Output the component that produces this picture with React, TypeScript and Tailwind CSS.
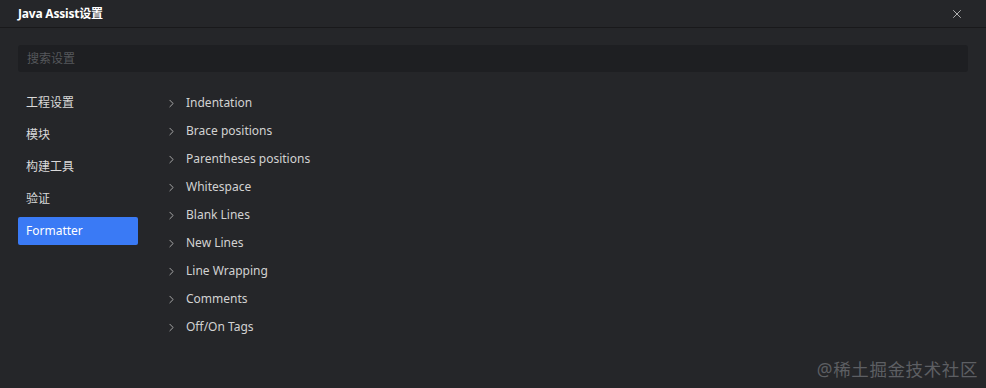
import { ChevronRight, X } from 'lucide-react';

const NAV_ITEMS = ['工程设置', '模块', '构建工具', '验证', 'Formatter'];

const SECTIONS = [
  'Indentation',
  'Brace positions',
  'Parentheses positions',
  'Whitespace',
  'Blank Lines',
  'New Lines',
  'Line Wrapping',
  'Comments',
  'Off/On Tags',
];

export default function App() {
  const active = 'Formatter';

  return (
    <div
      className="relative w-[986px] h-[388px] bg-[#252629] text-[#d4d4d4] overflow-hidden"
      style={{ fontFamily: '"Noto Sans", "Noto Sans CJK SC", sans-serif' }}
    >
      {/* Header */}
      <div className="h-[28px] flex items-center justify-between pl-[18px] pr-[22px] border-b border-[#19191b]">
        <span className="text-[12px] font-bold text-white tracking-[-0.2px]">Java Assist设置</span>
        <X size={14} strokeWidth={1.5} className="text-[#c4c4c4]" />
      </div>

      {/* Search */}
      <div className="px-[18px] pt-[17px]">
        <div className="h-[27px] rounded-[3px] bg-[#1e1f22] flex items-center px-[9px]">
          <span className="text-[12px] text-[#55575b]">搜索设置</span>
        </div>
      </div>

      {/* Body */}
      <div className="flex pl-[18px] pt-[17px]">
        <div className="w-[120px] flex flex-col gap-[4px]">
          {NAV_ITEMS.map((item) => (
            <div
              key={item}
              className={
                item === active
                  ? 'h-[28px] flex items-center px-[8px] rounded-[2px] bg-[#3a7af5] text-white text-[12px]'
                  : 'h-[28px] flex items-center px-[8px] text-[12px] text-[#dadada]'
              }
            >
              {item}
            </div>
          ))}
        </div>

        <div className="ml-[27px] flex flex-col">
          {SECTIONS.map((s) => (
            <div key={s} className="h-[28px] flex items-center text-[12px] text-[#d2d2d2]">
              <ChevronRight size={13} strokeWidth={1.7} className="text-[#b0b0b0] mr-[8px]" />
              {s}
            </div>
          ))}
        </div>
      </div>

      {/* Watermark */}
      <div className="absolute right-[8px] bottom-[6px] text-[17.5px] text-[#5d5f63] tracking-[0.6px]">
        @稀土掘金技术社区
      </div>
    </div>
  );
}
